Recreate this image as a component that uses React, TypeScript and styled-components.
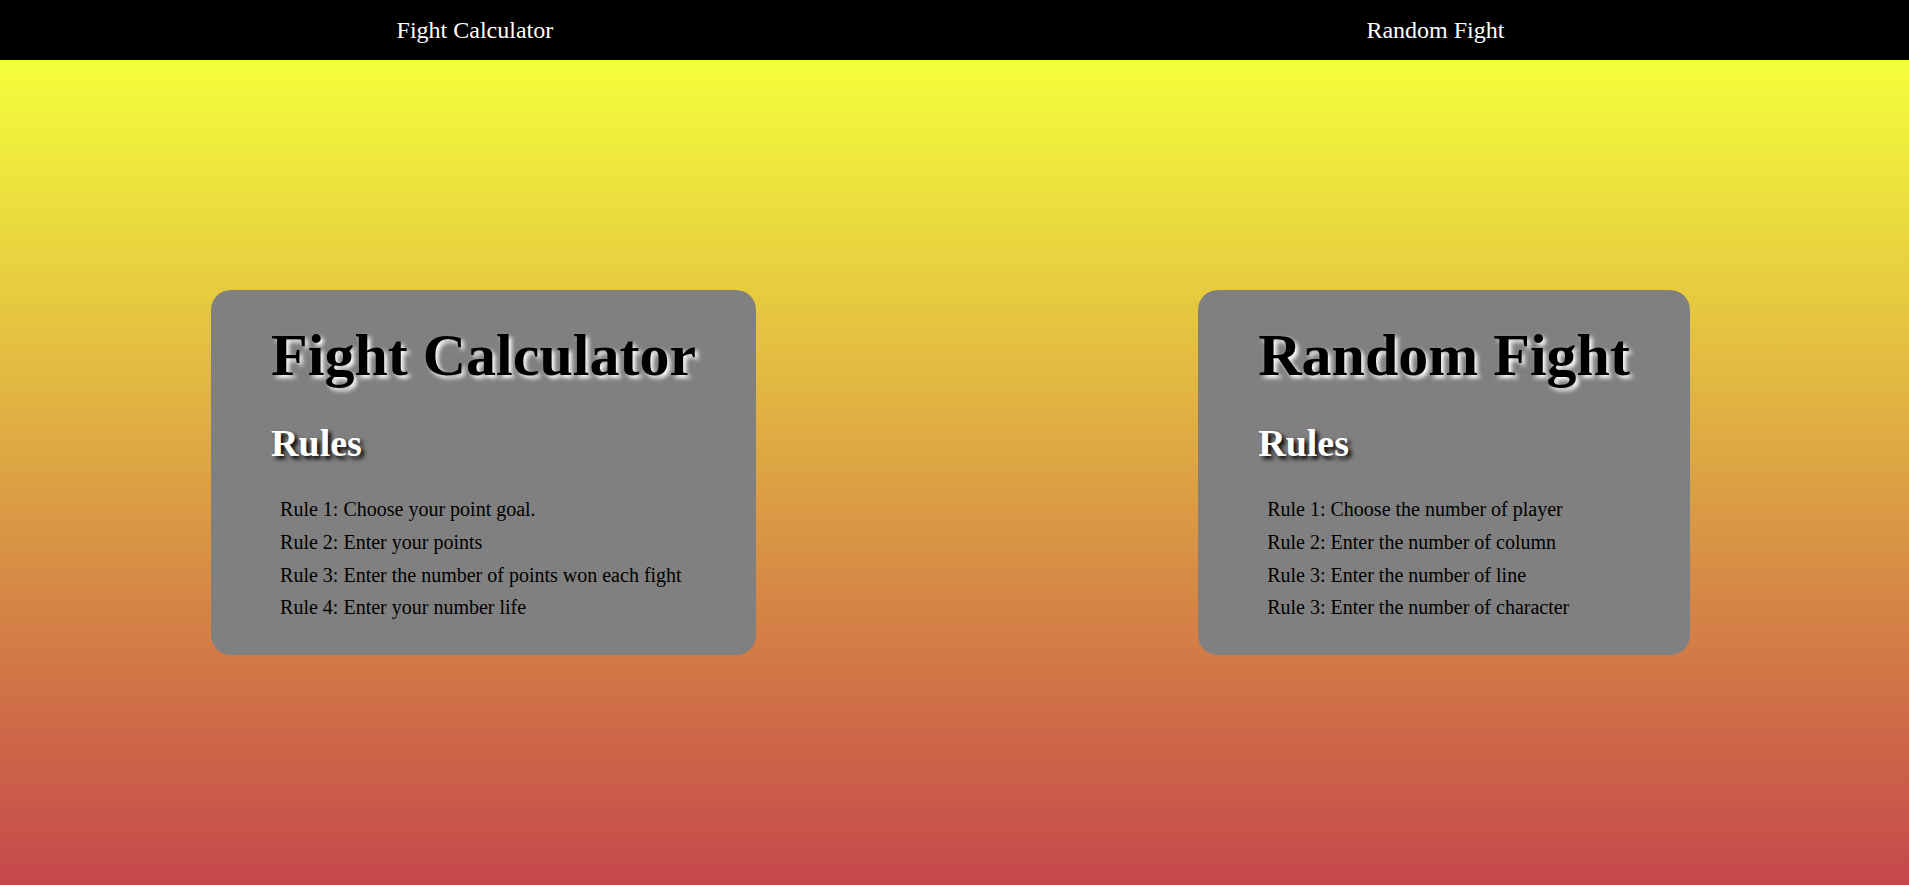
import React from 'react';
import styled, { createGlobalStyle } from 'styled-components';

const GlobalStyle = createGlobalStyle`
    html,
    body {
        margin: 0;
        padding: 0;
        overflow-x: hidden;
    }
    body {
        font-family: 'Liberation Serif', 'Times New Roman', serif;
    }
`;

const Page = styled.div`
    display: flex;
    flex-direction: column;
    min-height: 100vh;
    background: linear-gradient(to bottom, #000 0, #000 60px, #f4ff3b 60px, #c5474b 100%);
`;

const NavBar = styled.nav`
    display: flex;
    justify-content: space-around;
    align-items: center;
    height: 60px;
    margin: 0 -2px 0 -10px;
`;

const NavLink = styled.a`
    color: #fff;
    font-size: 24px;
    text-decoration: none;
    cursor: pointer;
`;

const Main = styled.main`
    flex: 1;
    display: flex;
    justify-content: space-around;
    align-items: center;
    margin: 0 -2px 0 -10px;
`;

const Card = styled.section`
    background: #808080;
    border-radius: 20px;
    padding: 31px 60px 31px;
`;

const Title = styled.h1`
    margin: 0;
    font-size: 60px;
    font-weight: bold;
    color: #000;
    text-shadow: 3px 3px 4px #fff;
`;

const SubTitle = styled.h2`
    margin: 31px 0 28px;
    font-size: 38px;
    font-weight: bold;
    color: #fff;
    text-shadow: 3px 3px 4px #000;
`;

const RuleList = styled.ul`
    list-style: none;
    margin: 0;
    padding: 0 0 0 9px;
`;

const Rule = styled.li`
    font-size: 20px;
    line-height: 32.7px;
    color: #000;
`;

interface GameCardProps {
    title: string;
    rules: string[];
}

const GameCard = ({ title, rules }: GameCardProps) => (
    <Card>
        <Title>{title}</Title>
        <SubTitle>Rules</SubTitle>
        <RuleList>
            {rules.map((rule, i) => (
                <Rule key={i}>{rule}</Rule>
            ))}
        </RuleList>
    </Card>
);

const games: GameCardProps[] = [
    {
        title: 'Fight Calculator',
        rules: [
            'Rule 1: Choose your point goal.',
            'Rule 2: Enter your points',
            'Rule 3: Enter the number of points won each fight',
            'Rule 4: Enter your number life',
        ],
    },
    {
        title: 'Random Fight',
        rules: [
            'Rule 1: Choose the number of player',
            'Rule 2: Enter the number of column',
            'Rule 3: Enter the number of line',
            'Rule 3: Enter the number of character',
        ],
    },
];

export default function App() {
    return (
        <>
            <GlobalStyle />
            <Page>
                <NavBar>
                    {games.map((g) => (
                        <NavLink key={g.title}>{g.title}</NavLink>
                    ))}
                </NavBar>
                <Main>
                    {games.map((g) => (
                        <GameCard key={g.title} title={g.title} rules={g.rules} />
                    ))}
                </Main>
            </Page>
        </>
    );
}
